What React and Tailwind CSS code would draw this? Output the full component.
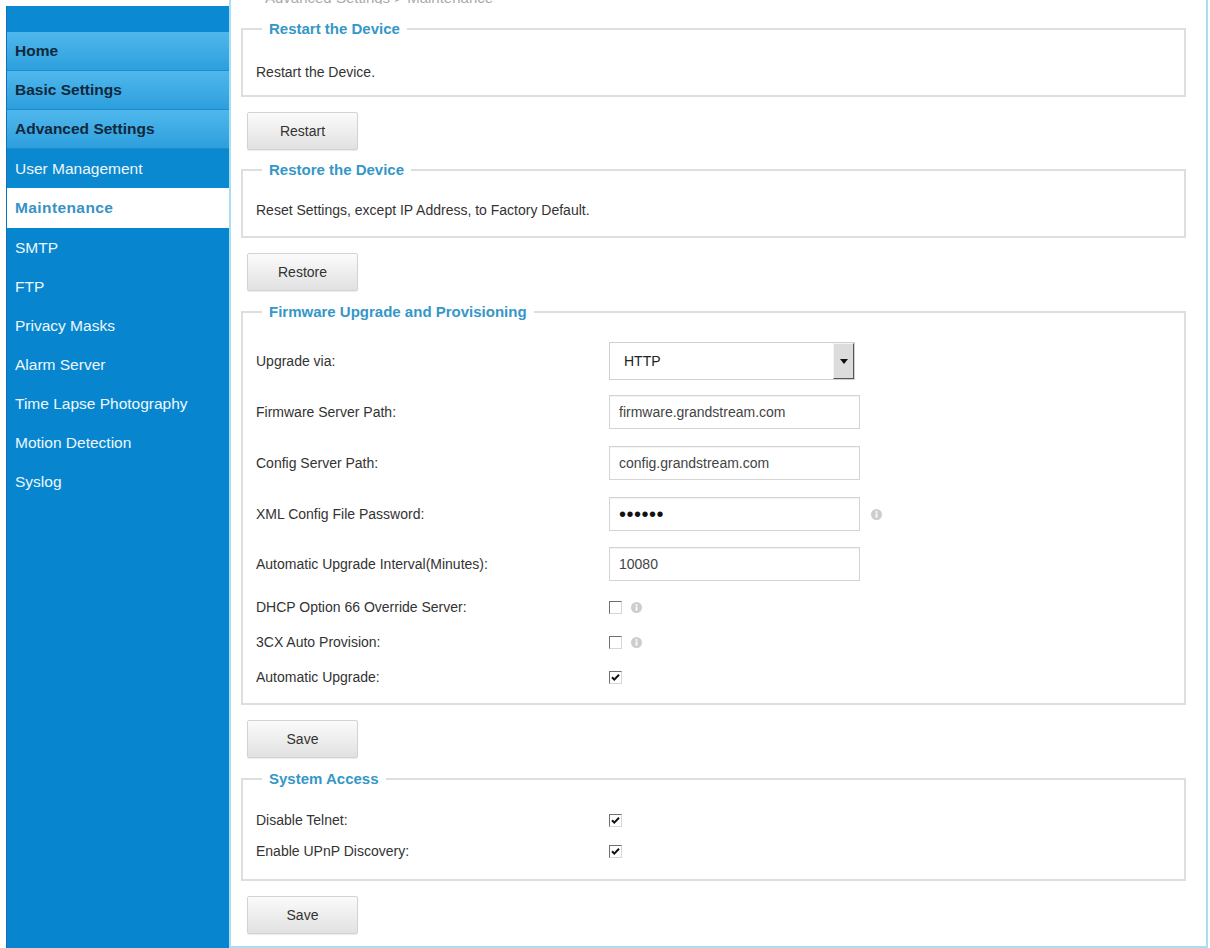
import React from 'react';

const topItems = ['Home', 'Basic Settings', 'Advanced Settings'];
const subItems = ['SMTP', 'FTP', 'Privacy Masks', 'Alarm Server', 'Time Lapse Photography', 'Motion Detection', 'Syslog'];

function Check({ checked }) {
  return (
    <span className="inline-flex h-[13px] w-[13px] items-center justify-center border border-t-[#707070] border-l-[#707070] border-r-[#d6d6d6] border-b-[#d6d6d6] bg-white">
      {checked && (
        <svg width="11" height="11" viewBox="0 0 11 11">
          <path d="M2 5.2 L4.3 7.6 L9 2.8" stroke="#111" strokeWidth="2" fill="none" />
        </svg>
      )}
    </span>
  );
}

function Info() {
  return (
    <svg width="11" height="11" viewBox="0 0 11 11" className="shrink-0">
      <circle cx="5.5" cy="5.5" r="5.5" fill="#cdcdcd" />
      <circle cx="5.5" cy="3" r="1" fill="#fff" />
      <rect x="4.6" y="4.6" width="1.8" height="4" fill="#fff" />
    </svg>
  );
}

function Button({ children }) {
  return (
    <button className="ml-[6px] flex h-[38px] w-[111px] items-center justify-center rounded-[2px] border border-[#d3d3d3] bg-gradient-to-b from-[#fbfbfb] to-[#e1e1e1] text-[14px] text-[#333] shadow-[0_1px_1px_rgba(0,0,0,0.08)]">
      {children}
    </button>
  );
}

function Legend({ children }) {
  return (
    <legend className="ml-[6px] px-[7px] text-[15px] font-bold leading-[18px] text-[#3597c7]">{children}</legend>
  );
}

function TextInput({ value, bullets }) {
  return (
    <div className="flex h-[34px] w-[251px] items-center border border-[#d4d4d4] bg-white pl-[9px] text-[14px] text-[#444] shadow-[inset_0_1px_1px_rgba(0,0,0,0.05)]">
      {bullets ? <span className="text-[20px] leading-none tracking-[0.5px] text-[#111]">••••••</span> : value}
    </div>
  );
}

function Row({ label, children, h = 'h-[34px]' }) {
  return (
    <div className={`flex items-center ${h}`}>
      <div className="w-[353px] text-[14px] text-[#333]">{label}</div>
      {children}
    </div>
  );
}

export default function App() {
  return (
    <div className="flex h-[948px] w-[1210px] bg-white pr-[2px] font-['Liberation_Sans',Arial,sans-serif]">
      {/* Sidebar */}
      <aside className="ml-[6px] mt-[6px] flex w-[223px] shrink-0 flex-col border-l border-[#0a74b6] bg-[#0786cf]">
        <div className="h-[26px] bg-[#0b89d2]" />
        {topItems.map((t) => (
          <div
            key={t}
            className="flex h-[39px] items-center border-b border-[#1e8dcd] bg-gradient-to-b from-[#4fb7ec] to-[#2c9fdd] pl-[8px] text-[15.5px] font-bold text-[#10283c]"
          >
            {t}
          </div>
        ))}
        <div className="flex h-[39px] items-center bg-[#0a88d0] pl-[8px] text-[15.5px] text-[#eef7fc]">User Management</div>
        <div className="flex h-[40px] items-center bg-white pl-[8px] text-[15.5px] font-bold tracking-[0.4px] text-[#3892c4]">Maintenance</div>
        {subItems.map((t) => (
          <div key={t} className="flex h-[39px] items-center pl-[8px] text-[15.5px] text-[#eef7fc]">
            {t}
          </div>
        ))}
      </aside>

      {/* Main */}
      <main className="flex flex-1 flex-col border-x-2 border-b-2 border-[#aadff2] pl-[10px] pr-[20px]">
        <div className="h-[4px] overflow-hidden">
          <div className="-mt-[13px] pl-[24px] text-[15px] text-[#aaa]">Advanced Settings &gt; Maintenance</div>
        </div>

        <fieldset className="mt-[16px] border-2 border-[#dedede] px-[13px] pb-[13px] pt-[24px]">
          <Legend>Restart the Device</Legend>
          <div className="text-[14px] leading-[20px] text-[#333]">Restart the Device.</div>
        </fieldset>
        <div className="mt-[15px]">
          <Button>Restart</Button>
        </div>

        <fieldset className="mt-[11px] border-2 border-[#dedede] px-[13px] pb-[16px] pt-[21px]">
          <Legend>Restore the Device</Legend>
          <div className="text-[14px] leading-[20px] text-[#333]">Reset Settings, except IP Address, to Factory Default.</div>
        </fieldset>
        <div className="mt-[15px]">
          <Button>Restore</Button>
        </div>

        <fieldset className="mt-[12px] border-2 border-[#dedede] px-[13px] pb-[8px] pt-[21px]">
          <Legend>Firmware Upgrade and Provisioning</Legend>
          <div className="flex flex-col">
            <Row label="Upgrade via:" h="h-[38px]">
              <div className="flex h-[38px] w-[246px] items-center border border-[#d0d0d0] bg-white">
                <span className="flex-1 pl-[14px] text-[14px] text-[#222]">HTTP</span>
                <span className="flex h-full w-[21px] items-center justify-center border border-t-[#f4f4f4] border-l-[#f4f4f4] border-r-[#555] border-b-[#555] bg-[#dcdcdc]">
                  <svg width="8" height="5" viewBox="0 0 8 5">
                    <path d="M0 0 H8 L4 5 Z" fill="#111" />
                  </svg>
                </span>
              </div>
            </Row>
            <div className="mt-[15px]">
              <Row label="Firmware Server Path:">
                <TextInput value="firmware.grandstream.com" />
              </Row>
            </div>
            <div className="mt-[17px]">
              <Row label="Config Server Path:">
                <TextInput value="config.grandstream.com" />
              </Row>
            </div>
            <div className="mt-[17px]">
              <Row label="XML Config File Password:">
                <TextInput bullets />
                <span className="ml-[11px]">
                  <Info />
                </span>
              </Row>
            </div>
            <div className="mt-[16px]">
              <Row label="Automatic Upgrade Interval(Minutes):">
                <TextInput value="10080" />
              </Row>
            </div>
            <div className="mt-[9px]">
              <Row label="DHCP Option 66 Override Server:" h="h-[35px]">
                <span className="flex items-center gap-[9px]">
                  <Check />
                  <Info />
                </span>
              </Row>
              <Row label="3CX Auto Provision:" h="h-[35px]">
                <span className="flex items-center gap-[9px]">
                  <Check />
                  <Info />
                </span>
              </Row>
              <Row label="Automatic Upgrade:" h="h-[35px]">
                <Check checked />
              </Row>
            </div>
          </div>
        </fieldset>
        <div className="mt-[15px]">
          <Button>Save</Button>
        </div>

        <fieldset className="mt-[12px] border-2 border-[#dedede] px-[13px] pb-[12px] pt-[17px]">
          <Legend>System Access</Legend>
          <Row label="Disable Telnet:" h="h-[31px]">
            <Check checked />
          </Row>
          <Row label="Enable UPnP Discovery:" h="h-[31px]">
            <Check checked />
          </Row>
        </fieldset>
        <div className="mt-[15px]">
          <Button>Save</Button>
        </div>
      </main>
    </div>
  );
}
